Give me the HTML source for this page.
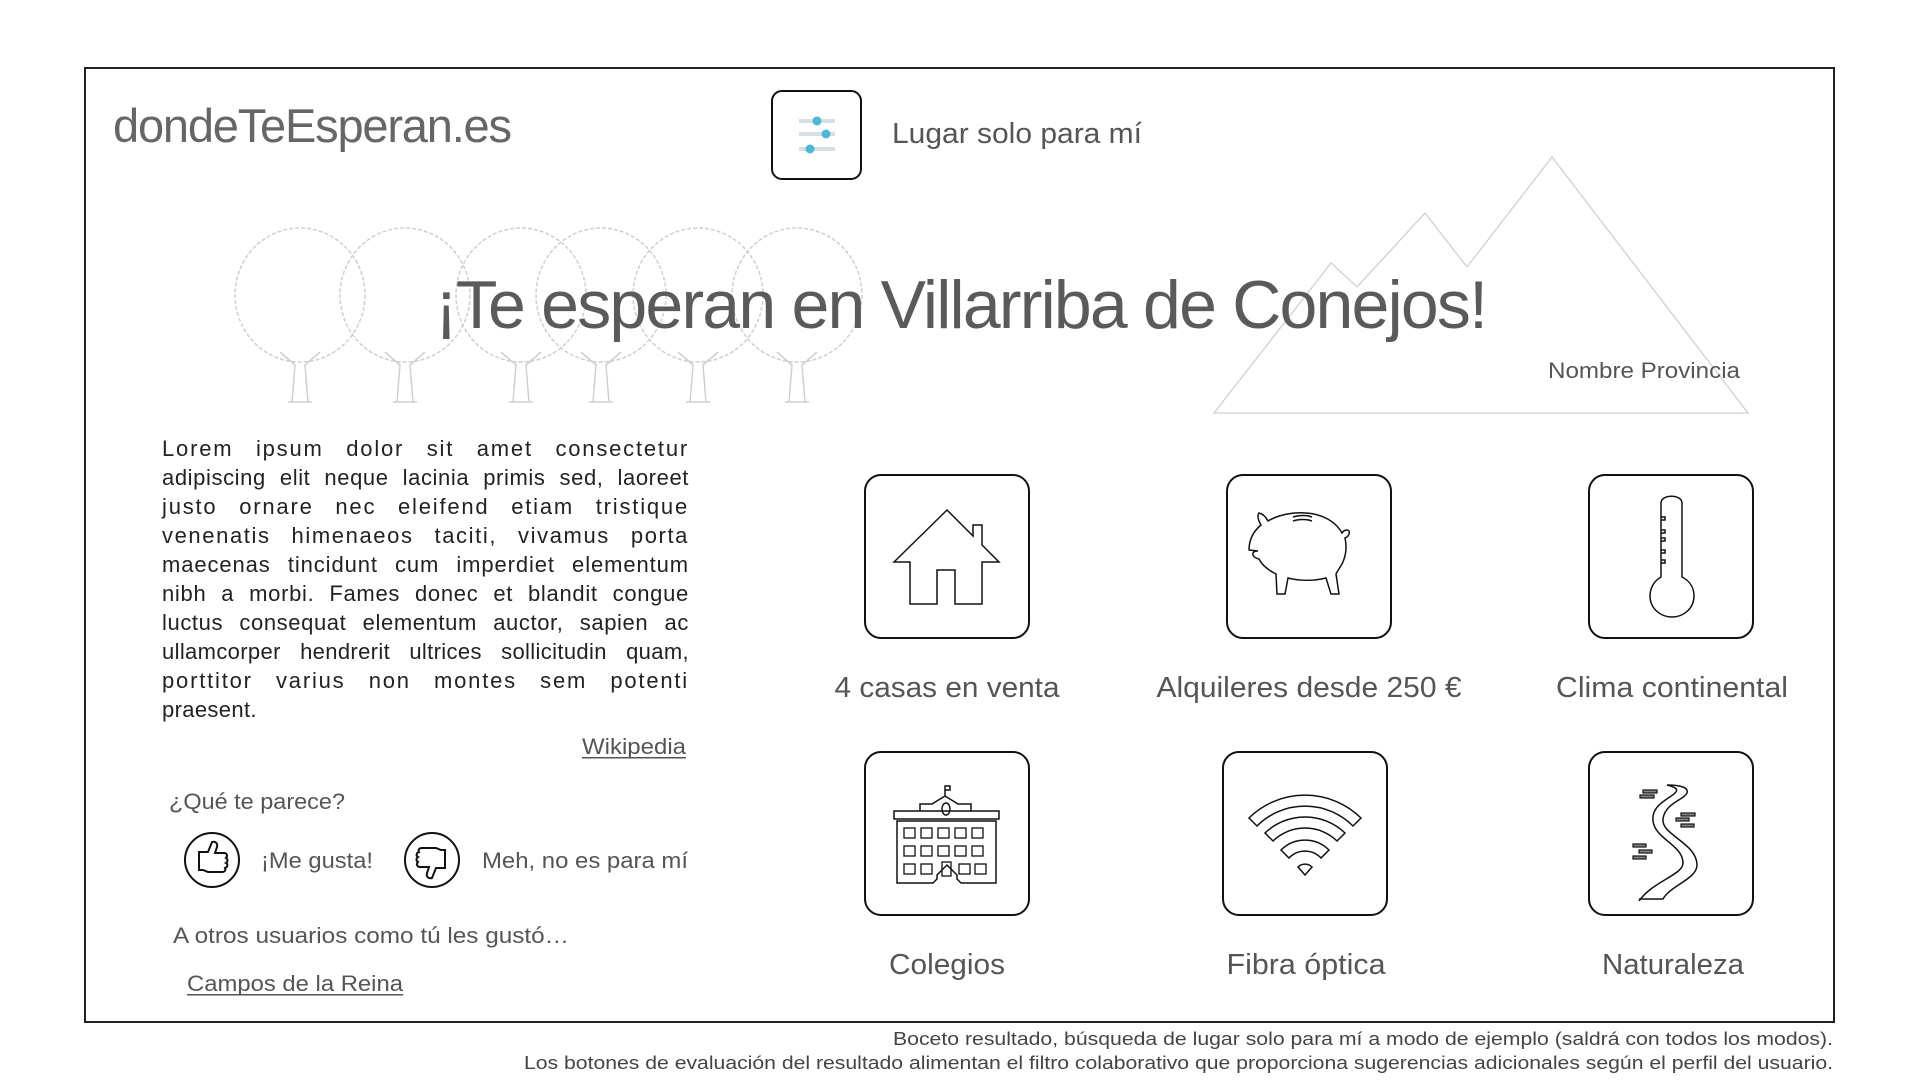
<!DOCTYPE html>
<html><head><meta charset="utf-8"><style>
html,body{margin:0;padding:0;background:#fff;}
body{width:1920px;height:1080px;position:relative;overflow:hidden;font-family:"Liberation Sans",Arial,sans-serif;}
.p{position:absolute;left:162px;width:527px;font-size:22px;letter-spacing:0.35px;line-height:29px;color:#222;white-space:nowrap;text-align:justify;text-align-last:justify;}
svg{position:absolute;left:0;top:0;}
</style></head><body>
<svg width="1920" height="1080" viewBox="0 0 1920 1080" font-family="Liberation Sans, Arial, sans-serif">
<g fill="none" stroke="#cfcfcf" stroke-width="1.5">
<g id="t"><ellipse cx="300" cy="295" rx="65" ry="67" stroke-dasharray="4 2"/><path d="M292 402 L295 365 L280 352 M308 402 L305 365 L320 352 M288 402 H312"/></g>
<use href="#t" x="105"/><use href="#t" x="221"/><use href="#t" x="301"/><use href="#t" x="398"/><use href="#t" x="497"/>
</g>
<path d="M1214 413 L1331 263 L1357 287 L1425 213 L1467 267 L1552 157 L1748 413 Z" fill="none" stroke="#d0d0d0" stroke-width="1.3"/>
<rect x="85" y="68" width="1749" height="954" fill="none" stroke="#222" stroke-width="2"/>
<text x="113" y="142" font-size="47" fill="#666" textLength="399" lengthAdjust="spacing">dondeTeEsperan.es</text>
<rect x="772" y="91" width="89" height="88" rx="10" fill="#fff" stroke="#111" stroke-width="2"/>
<g stroke="#d8dfe3" stroke-width="4"><path d="M799 121H835M799 134H835M799 149H835"/></g>
<g fill="#4cb8d8"><circle cx="817" cy="121" r="4.5"/><circle cx="826" cy="134" r="4.5"/><circle cx="810" cy="149" r="4.5"/></g>
<text x="892" y="143" font-size="29" fill="#555" textLength="250" lengthAdjust="spacingAndGlyphs">Lugar solo para mí</text>
<text x="435" y="328" font-size="68" fill="#5a5a5a" textLength="1053" lengthAdjust="spacing">¡Te esperan en Villarriba de Conejos!</text>
<text x="1548" y="378" font-size="22" fill="#555" textLength="192" lengthAdjust="spacingAndGlyphs">Nombre Provincia</text>
<g fill="#555" font-size="22">
<text x="582" y="754" textLength="104" lengthAdjust="spacingAndGlyphs">Wikipedia</text>
<rect x="582" y="757" width="104" height="1.5"/>
<text x="169" y="809" textLength="176" lengthAdjust="spacingAndGlyphs">¿Qué te parece?</text>
<text x="261" y="868" textLength="112" lengthAdjust="spacingAndGlyphs">¡Me gusta!</text>
<text x="482" y="868" textLength="206" lengthAdjust="spacingAndGlyphs">Meh, no es para mí</text>
<text x="173" y="943" textLength="396" lengthAdjust="spacingAndGlyphs">A otros usuarios como tú les gustó…</text>
<text x="187" y="991" textLength="216" lengthAdjust="spacingAndGlyphs">Campos de la Reina</text>
<rect x="187" y="994" width="216" height="1.5"/>
</g>
<g fill="none" stroke="#111" stroke-width="2">
<circle cx="212" cy="860" r="27"/>
<path d="M199 852h9l4-10c3-1 6 1 5 5l-2 6h9c3 0 4 3 2 5c2 1 2 4 0 5c2 1 2 4-1 5c1 2 0 4-3 4h-14l-5-2h-4z"/>
<circle cx="432" cy="860" r="27"/>
<path d="M445 868h-9l-4 10c-3 1-6-1-5-5l2-6h-9c-3 0-4-3-2-5c-2-1-2-4 0-5c-2-1-2-4 1-5c-1-2 0-4 3-4h14l5 2h4z"/>
</g>
<g fill="none" stroke="#111" stroke-width="2">
<rect x="865" y="475" width="164" height="163" rx="16"/>
<rect x="1227" y="475" width="164" height="163" rx="16"/>
<rect x="1589" y="475" width="164" height="163" rx="16"/>
<rect x="865" y="752" width="164" height="163" rx="16"/>
<rect x="1223" y="752" width="164" height="163" rx="16"/>
<rect x="1589" y="752" width="164" height="163" rx="16"/>
</g>
<g fill="none" stroke="#111" stroke-width="1.5">
<path transform="translate(865,475)" d="M29 87 L82 35 L108 61 L108 50 L117 50 L117 70 L134 87 L117 87 L117 129 L90 129 L90 95 L72 95 L72 129 L45 129 L45 87 Z"/>
<g transform="translate(1227,475)">
<path d="M22 75c0-12 6-20 12-25c-3-5-4-10-2-12c4 1 7 4 9 8c10-6 24-9 38-8c17 1 30 9 36 20c2-3 5-4 7-2c1 3-1 6-4 7c2 9 1 18-3 26c-3 5-5 8-6 10l3 20h-8l-5-16c-12 3-26 3-38 0l-3 16h-8l-1-20c-8-4-14-9-17-15c-4-1-7-3-6-6c1-2 3-2 5-2z"/>
<path d="M66 42c6-2 14-2 19 0M66 46c6-2 14-2 19 0"/>
</g>
<g transform="translate(1589,475)">
<path d="M72 102V28c0-9 21-9 21 0V102c8 4 12 11 12 19c0 12-10 21-22 21s-22-9-22-21c0-8 4-15 11-19z"/>
<path d="M72 42h4v3h-4M72 55h4v3h-4M72 63h4v3h-4M72 75h4v3h-4M72 85h4v3h-4"/>
</g>
<g transform="translate(865,752)">
<path d="M80 44V34h5v4h-5M55 59V52h12l13-8l13 8h13v7M29 59h105v8H29z"/>
<ellipse cx="81" cy="57" rx="4" ry="6"/>
<path d="M32 69h99v62H96l-4-4v-4l-4-4l-6-6l-6 6l-4 4v4l-4 4H32z"/>
<g stroke-width="1.3">
<rect x="39" y="76" width="11" height="10"/><rect x="56" y="76" width="11" height="10"/><rect x="73" y="76" width="11" height="10"/><rect x="90" y="76" width="11" height="10"/><rect x="107" y="76" width="11" height="10"/>
<rect x="39" y="94" width="11" height="10"/><rect x="56" y="94" width="11" height="10"/><rect x="73" y="94" width="11" height="10"/><rect x="90" y="94" width="11" height="10"/><rect x="107" y="94" width="11" height="10"/>
<rect x="39" y="112" width="11" height="10"/><rect x="56" y="112" width="11" height="10"/><rect x="77" y="110" width="9" height="14"/><rect x="94" y="112" width="11" height="10"/><rect x="110" y="112" width="11" height="10"/>
</g>
</g>
<g transform="translate(1305,875)">
<path d="M-56 -57A80 80 0 0 1 56 -57L48 -49A68 68 0 0 0 -48 -49Z"/>
<path d="M-40 -42A58 58 0 0 1 40 -42L32 -34A46 46 0 0 0 -32 -34Z"/>
<path d="M-24 -25A34 34 0 0 1 24 -25L16 -17A22 22 0 0 0 -16 -17Z"/>
<path d="M0 0L-7 -8A10 10 0 0 1 7 -8Z"/>
</g>
<g transform="translate(1589,752)">
<path d="M78 33c12 0 22 2 20 8c-3 7-22 10-24 26c-2 16 34 24 34 46c0 14-26 20-34 34h-24"/>
<path d="M78 33c8 2 12 4 8 8c-6 6-24 12-22 28c2 18 30 24 30 42c0 12-30 18-44 38"/>
<g fill="#888" stroke-width="1.2"><rect x="54" y="38" width="14" height="3"/><rect x="51" y="43" width="14" height="3"/><rect x="92" y="61" width="14" height="3"/><rect x="87" y="66" width="13" height="3"/><rect x="92" y="72" width="13" height="3"/><rect x="44" y="92" width="13" height="3"/><rect x="50" y="98" width="13" height="3"/><rect x="44" y="104" width="13" height="3"/></g>
</g>
</g>
<g fill="#555" font-size="29" text-anchor="middle">
<text x="947" y="697" textLength="225" lengthAdjust="spacingAndGlyphs">4 casas en venta</text>
<text x="1309" y="697" textLength="305" lengthAdjust="spacingAndGlyphs">Alquileres desde 250 €</text>
<text x="1672" y="697" textLength="232" lengthAdjust="spacingAndGlyphs">Clima continental</text>
<text x="947" y="974" textLength="116" lengthAdjust="spacingAndGlyphs">Colegios</text>
<text x="1306" y="974" textLength="159" lengthAdjust="spacingAndGlyphs">Fibra óptica</text>
<text x="1673" y="974" textLength="142" lengthAdjust="spacingAndGlyphs">Naturaleza</text>
</g>
<g fill="#444" font-size="18">
<text x="893" y="1045" textLength="940" lengthAdjust="spacingAndGlyphs">Boceto resultado, búsqueda de lugar solo para mí a modo de ejemplo (saldrá con todos los modos).</text>
<text x="524" y="1069" textLength="1309" lengthAdjust="spacingAndGlyphs">Los botones de evaluación del resultado alimentan el filtro colaborativo que proporciona sugerencias adicionales según el perfil del usuario.</text>
</g>
</svg>
<div class="p" style="top:434px;letter-spacing:1.8px">Lorem ipsum dolor sit amet consectetur</div>
<div class="p" style="top:463px;letter-spacing:0.6px">adipiscing elit neque lacinia primis sed, laoreet</div>
<div class="p" style="top:492px;letter-spacing:1.8px">justo ornare nec eleifend etiam tristique</div>
<div class="p" style="top:521px;letter-spacing:1.6px">venenatis himenaeos taciti, vivamus porta</div>
<div class="p" style="top:550px;letter-spacing:0.9px">maecenas tincidunt cum imperdiet elementum</div>
<div class="p" style="top:579px;letter-spacing:0.7px">nibh a morbi. Fames donec et blandit congue</div>
<div class="p" style="top:608px;letter-spacing:0.6px">luctus consequat elementum auctor, sapien ac</div>
<div class="p" style="top:637px">ullamcorper hendrerit ultrices sollicitudin quam,</div>
<div class="p" style="top:666px;letter-spacing:1.8px">porttitor varius non montes sem potenti</div>
<div class="p" style="top:695px;text-align-last:left">praesent.</div>
</body></html>
